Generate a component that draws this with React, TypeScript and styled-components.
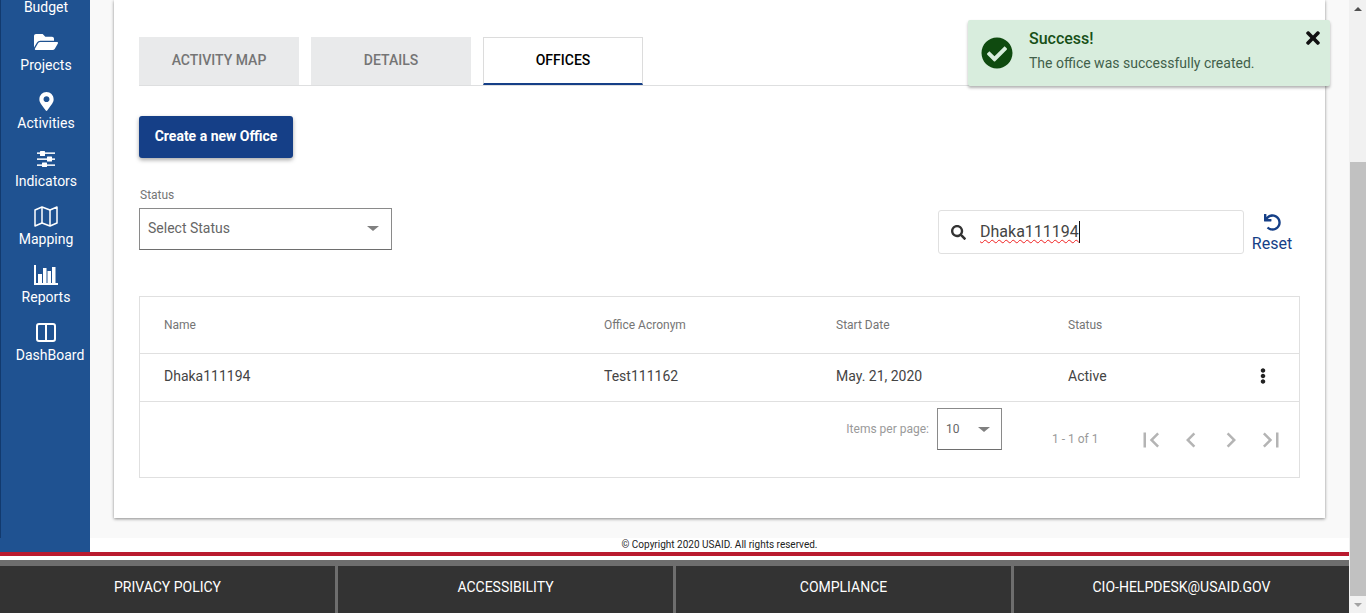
import React from 'react';
import styled, { createGlobalStyle } from 'styled-components';
import {
  FaCheckCircle,
  FaEllipsisV,
  FaFolderOpen,
  FaMapMarkerAlt,
  FaSearch,
  FaTimes,
  FaUndo,
} from 'react-icons/fa';
import { MdChevronLeft, MdChevronRight, MdFirstPage, MdLastPage } from 'react-icons/md';

const GlobalStyle = createGlobalStyle`
  html, body {
    margin: 0;
    padding: 0;
    overflow: hidden;
  }
  body {
    font-family: Roboto, "Liberation Sans", sans-serif;
    background: #fff;
  }
`;

const Shell = styled.div`
  display: flex;
  width: 1366px;
  height: 613px;
  overflow: hidden;
`;

const Page = styled.div`
  width: 1349px;
  display: flex;
  flex-direction: column;
`;

const Body = styled.div`
  display: flex;
  height: 552px;
  flex: none;
`;

const Sidebar = styled.nav`
  width: 90px;
  flex: none;
  background: #1f5291;
  position: relative;
  overflow: hidden;
  &::before {
    content: '';
    position: absolute;
    left: 0;
    top: 0;
    width: 1px;
    height: 538px;
    background: #123a6e;
  }
`;

const NavList = styled.div`
  margin-top: -43px;
  display: flex;
  flex-direction: column;
`;

const NavItem = styled.div<{ $gap?: number }>`
  height: 58px;
  display: flex;
  flex-direction: column;
  align-items: center;
  justify-content: flex-end;
  color: #fff;
  font-size: 14px;
  line-height: 16px;
  padding-left: 2px;
  box-sizing: border-box;
  white-space: nowrap;
  svg {
    display: block;
    margin-bottom: ${(p) => p.$gap ?? 4}px;
  }
`;

const DashLabel = styled.span`
  margin-left: 8px;
`;

const Main = styled.div`
  flex: 1;
  display: flex;
  flex-direction: column;
  min-width: 0;
`;

const Section = styled.div`
  height: 538px;
  background: #f9f9f9;
  padding: 0 24px 0 24px;
  box-sizing: border-box;
  position: relative;
  flex: none;
`;

const Card = styled.div`
  background: #fff;
  height: 518px;
  box-shadow: 0 1px 3px rgba(0, 0, 0, 0.45);
  padding: 37px 25px 0;
  box-sizing: border-box;
`;

const Tabs = styled.div`
  display: flex;
  gap: 12px;
  height: 49px;
  box-sizing: border-box;
  border-bottom: 1px solid #dedfe0;
`;

const Tab = styled.div<{ $active?: boolean }>`
  width: 160px;
  height: 48px;
  box-sizing: border-box;
  display: flex;
  align-items: center;
  justify-content: center;
  font-size: 14px;
  font-weight: 500;
  padding-bottom: 2px;
  color: ${(p) => (p.$active ? '#000' : '#757575')};
  background: ${(p) => (p.$active ? '#fff' : '#e9eaeb')};
  border: ${(p) => (p.$active ? '1px solid #dcdcdc' : 'none')};
  border-bottom: ${(p) => (p.$active ? '2px solid #153f87' : 'none')};
`;

const CreateButton = styled.button`
  display: block;
  margin-top: 30px;
  width: 154px;
  height: 42px;
  padding: 0 0 2px;
  border: none;
  border-radius: 3px;
  background: #153f87;
  color: #fff;
  font-family: inherit;
  font-size: 14px;
  font-weight: 700;
  box-shadow: 0 2px 4px rgba(0, 0, 0, 0.35);
`;

const FilterRow = styled.div`
  display: flex;
  margin-top: 30px;
  height: 66px;
`;

const StatusField = styled.div`
  width: 253px;
`;

const FieldLabel = styled.div`
  font-size: 12px;
  line-height: 14px;
  color: #757575;
  padding-left: 1px;
  margin-bottom: 6px;
`;

const SelectBox = styled.div<{ $small?: boolean }>`
  width: ${(p) => (p.$small ? 65 : 253)}px;
  height: 42px;
  box-sizing: border-box;
  border: 1px solid #8a8a8a;
  border-bottom-color: #6e6e6e;
  display: flex;
  align-items: center;
  justify-content: space-between;
  padding: ${(p) => (p.$small ? '0 11px 0 8px' : '0 12px 2px 8px')};
  font-size: ${(p) => (p.$small ? 12 : 14)}px;
  color: #666;
  background: #fff;
`;

const Caret = styled.span`
  width: 0;
  height: 0;
  border-left: 6px solid transparent;
  border-right: 6px solid transparent;
  border-top: 5px solid #808080;
`;

const SearchArea = styled.div`
  margin-left: auto;
  margin-right: 8px;
  margin-top: 22px;
  display: flex;
  gap: 8px;
`;

const SearchBox = styled.div`
  width: 306px;
  height: 44px;
  box-sizing: border-box;
  border: 1px solid #e0e0e0;
  border-radius: 3px;
  display: flex;
  align-items: center;
  padding-left: 12px;
  color: #333;
  svg {
    font-size: 15px;
  }
`;

const SearchText = styled.span`
  margin-left: 14px;
  font-size: 16px;
  line-height: 22px;
  color: #444;
  border-right: 1px solid #111;
  text-decoration: underline wavy #f02020 1px;
  text-underline-offset: 2px;
`;

const ResetLink = styled.div`
  width: 40px;
  color: #153f87;
  font-size: 16px;
  line-height: 20px;
  display: flex;
  flex-direction: column;
  align-items: center;
  svg {
    display: block;
    font-size: 19px;
    margin: 4px 0 3px;
  }
`;

const Table = styled.div`
  margin-top: 42px;
  border: 1px solid #e0e0e0;
  height: 182px;
  box-sizing: border-box;
`;

const Row = styled.div<{ $head?: boolean }>`
  display: grid;
  grid-template-columns: 440px 232px 232px 1fr;
  align-items: center;
  padding: ${(p) => (p.$head ? '0 0 0 24px' : '0 0 3px 24px')};
  box-sizing: border-box;
  height: ${(p) => (p.$head ? 57 : 48)}px;
  border-bottom: 1px solid #e0e0e0;
  font-size: ${(p) => (p.$head ? 12 : 14)}px;
  color: ${(p) => (p.$head ? '#757575' : '#444')};
`;

const ActionCell = styled.div`
  display: flex;
  justify-content: space-between;
  align-items: center;
  padding-right: 28px;
  svg {
    color: #222;
    font-size: 16px;
  }
`;

const Paginator = styled.div`
  display: flex;
  justify-content: flex-end;
  padding: 6px 13px 0 0;
  font-size: 12px;
  color: #9a9a9a;
`;

const PerPage = styled.div`
  display: flex;
  align-items: center;
  gap: 8px;
  height: 42px;
`;

const RangeLabel = styled.div`
  margin-left: 50px;
  height: 60px;
  display: flex;
  align-items: center;
  padding-top: 1px;
  box-sizing: border-box;
  width: 76px;
`;

const PageButtons = styled.div`
  display: flex;
  gap: 10px;
  height: 64px;
  align-items: center;
  margin-left: 8px;
  color: #b4b4b4;
  svg {
    display: block;
    width: 30px;
    height: 30px;
  }
`;

const CopyrightStrip = styled.div`
  height: 14px;
  background: #fff;
  text-align: center;
  font-size: 10px;
  line-height: 14px;
  color: #222;
`;

const Footer = styled.footer`
  flex: 1;
  display: flex;
  flex-direction: column;
`;

const RedRule = styled.div`
  height: 4px;
  background: #ba1a2e;
`;

const WhiteGap = styled.div`
  height: 4px;
  background: #fff;
`;

const FooterLinks = styled.div`
  flex: 1;
  display: grid;
  grid-template-columns: 338px 338px 338px 335px;
  background: #333;
  border-top: 6px solid #6e6e6e;
`;

const FooterLink = styled.div`
  display: flex;
  align-items: center;
  justify-content: center;
  color: #fff;
  font-size: 14px;
  padding-bottom: 5px;
  border-right: 3px solid #6e6e6e;
  &:last-child {
    border-right: none;
  }
`;

const Toast = styled.div`
  position: absolute;
  left: 878px;
  top: 20px;
  width: 362px;
  height: 66px;
  background: #d8eddd;
  border-radius: 2px;
  box-shadow: 0 2px 3px rgba(0, 0, 0, 0.3);
  display: flex;
  align-items: flex-start;
  padding: 9px 0 0 13px;
  box-sizing: border-box;
  svg {
    flex: none;
  }
  > svg {
    margin-top: 8px;
  }
`;

const ToastBody = styled.div`
  margin-left: 16px;
`;

const ToastTitle = styled.div`
  font-size: 16px;
  font-weight: 500;
  line-height: 20px;
  color: #175017;
  margin-bottom: 5px;
`;

const ToastText = styled.div`
  font-size: 14px;
  line-height: 18px;
  color: #41604a;
`;

const ToastClose = styled.div`
  position: absolute;
  right: 7px;
  top: 8px;
  color: #111;
  line-height: 0;
`;

const Scrollbar = styled.div`
  width: 17px;
  flex: none;
  background: #f1f1f1;
  display: flex;
  flex-direction: column;
  justify-content: space-between;
  position: relative;
`;

const ScrollArrow = styled.div<{ $down?: boolean }>`
  height: 17px;
  display: flex;
  align-items: center;
  justify-content: center;
  &::after {
    content: '';
    width: 0;
    height: 0;
    border-left: 4px solid transparent;
    border-right: 4px solid transparent;
    ${(p) =>
      p.$down
        ? 'border-top: 4px solid #a3a3a3;'
        : 'border-bottom: 4px solid #505050;'}
  }
`;

const ScrollThumb = styled.div`
  position: absolute;
  left: 1px;
  right: 0;
  top: 162px;
  height: 434px;
  background: #c1c1c1;
`;

const SlidersIcon = () => (
  <svg width="20" height="16" viewBox="0 0 20 16" fill="#fff">
    <rect x="1" y="1.4" width="18" height="1.5" />
    <rect x="1" y="7.4" width="18" height="1.5" />
    <rect x="1" y="13.4" width="18" height="1.5" />
    <rect x="4" y="0" width="5" height="5" rx="0.5" />
    <rect x="11" y="5.5" width="5" height="5" rx="0.5" />
    <rect x="6" y="11.5" width="5" height="4.5" rx="0.5" />
  </svg>
);

const MapIcon = () => (
  <svg width="24" height="21" viewBox="0 0 24 21" fill="none" stroke="#fff" strokeWidth="1.5" strokeLinejoin="round">
    <path d="M1 4 L8 1 L16 4 L23 1 V17 L16 20 L8 17 L1 20 Z" />
    <path d="M8 1 V17 M16 4 V20" />
  </svg>
);

const ReportsIcon = () => (
  <svg width="24" height="20" viewBox="0 0 24 20" fill="#fff">
    <path d="M0 0 H2 V18 H24 V20 H0 Z" />
    <rect x="4" y="9" width="4" height="9" />
    <rect x="9" y="3" width="3.5" height="15" />
    <rect x="13.5" y="6" width="3.5" height="12" />
    <rect x="18" y="2" width="3.5" height="16" />
  </svg>
);

const DashboardIcon = () => (
  <svg width="20" height="19" viewBox="0 0 20 19" fill="none" stroke="#fff" strokeWidth="2">
    <rect x="1" y="1" width="18" height="17" rx="2" />
    <line x1="10" y1="1" x2="10" y2="18" />
  </svg>
);

const navItems = [
  { label: 'Budget', icon: null, gap: 4 },
  { label: 'Projects', icon: <FaFolderOpen size={24} />, gap: 3 },
  { label: 'Activities', icon: <FaMapMarkerAlt size={19} />, gap: 4 },
  { label: 'Indicators', icon: <SlidersIcon />, gap: 6 },
  { label: 'Mapping', icon: <MapIcon />, gap: 4 },
  { label: 'Reports', icon: <ReportsIcon />, gap: 4 },
];

const tabs = ['ACTIVITY MAP', 'DETAILS', 'OFFICES'];
const footerLinks = ['PRIVACY POLICY', 'ACCESSIBILITY', 'COMPLIANCE', 'CIO-HELPDESK@USAID.GOV'];

export default function App() {
  return (
    <Shell>
      <GlobalStyle />
      <Page>
        <Body>
          <Sidebar>
            <NavList>
              {navItems.map((item) => (
                <NavItem key={item.label} $gap={item.gap}>
                  {item.icon}
                  {item.label}
                </NavItem>
              ))}
              <NavItem $gap={5}>
                <DashboardIcon />
                <DashLabel>DashBoard</DashLabel>
              </NavItem>
            </NavList>
          </Sidebar>
          <Main>
            <Section>
              <Card>
                <Tabs>
                  {tabs.map((t) => (
                    <Tab key={t} $active={t === 'OFFICES'}>
                      {t}
                    </Tab>
                  ))}
                </Tabs>
                <CreateButton>Create a new Office</CreateButton>
                <FilterRow>
                  <StatusField>
                    <FieldLabel>Status</FieldLabel>
                    <SelectBox>
                      Select Status
                      <Caret />
                    </SelectBox>
                  </StatusField>
                  <SearchArea>
                    <SearchBox>
                      <FaSearch />
                      <SearchText>Dhaka111194</SearchText>
                    </SearchBox>
                    <ResetLink>
                      <FaUndo />
                      Reset
                    </ResetLink>
                  </SearchArea>
                </FilterRow>
                <Table>
                  <Row $head>
                    <div>Name</div>
                    <div>Office Acronym</div>
                    <div>Start Date</div>
                    <div>Status</div>
                  </Row>
                  <Row>
                    <div>Dhaka111194</div>
                    <div>Test111162</div>
                    <div>May. 21, 2020</div>
                    <ActionCell>
                      Active
                      <FaEllipsisV />
                    </ActionCell>
                  </Row>
                  <Paginator>
                    <PerPage>
                      Items per page:
                      <SelectBox $small>
                        <span>10</span>
                        <Caret />
                      </SelectBox>
                    </PerPage>
                    <RangeLabel>1 - 1 of 1</RangeLabel>
                    <PageButtons>
                      <MdFirstPage />
                      <MdChevronLeft />
                      <MdChevronRight />
                      <MdLastPage />
                    </PageButtons>
                  </Paginator>
                </Table>
              </Card>
              <Toast>
                <FaCheckCircle size={32} color="#0f4a0f" />
                <ToastBody>
                  <ToastTitle>Success!</ToastTitle>
                  <ToastText>The office was successfully created.</ToastText>
                </ToastBody>
                <ToastClose>
                  <FaTimes size={20} />
                </ToastClose>
              </Toast>
            </Section>
            <CopyrightStrip>© Copyright 2020 USAID. All rights reserved.</CopyrightStrip>
          </Main>
        </Body>
        <Footer>
          <RedRule />
          <WhiteGap />
          <FooterLinks>
            {footerLinks.map((l) => (
              <FooterLink key={l}>{l}</FooterLink>
            ))}
          </FooterLinks>
        </Footer>
      </Page>
      <Scrollbar>
        <ScrollArrow />
        <ScrollThumb />
        <ScrollArrow $down />
      </Scrollbar>
    </Shell>
  );
}
